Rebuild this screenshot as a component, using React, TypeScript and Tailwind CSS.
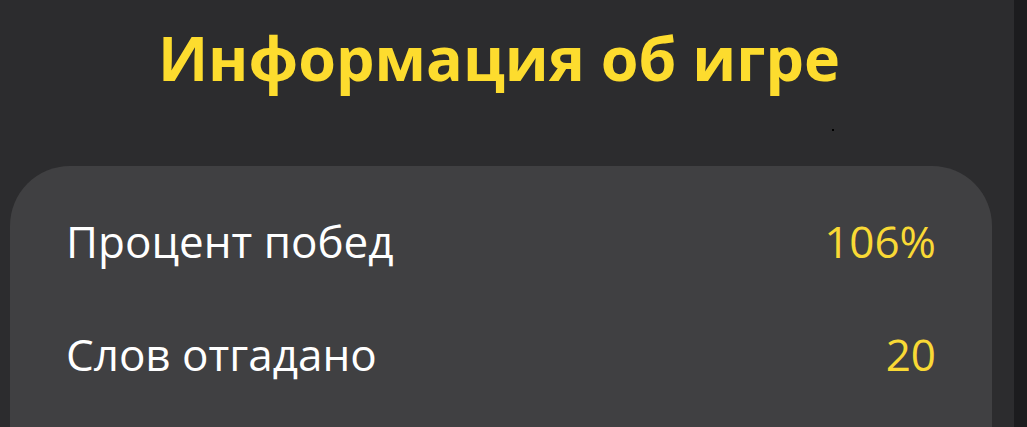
export default function App() {
  return (
    <div className="flex h-[427px] w-[1027px] overflow-hidden bg-[#2c2c2e]" style={{ fontFamily: '"Open Sans", sans-serif' }}>
      <div className="relative flex flex-1 flex-col pl-[10px] pr-[22px]">
        <h1 className="mt-[18px] pr-[4px] text-center text-[61px] font-bold leading-[80px] text-[#fddc2e]">
          Информация об игре
        </h1>
        <div className="absolute left-[832px] top-[129px] h-[2px] w-[2px] bg-black" />
        <div className="mt-[68px] flex flex-1 flex-col gap-[57px] rounded-t-[60px] bg-[#404042] px-[56px] pt-[47px]">
          <div className="flex items-center justify-between text-[44px] leading-[56px]">
            <span className="text-white">Процент побед</span>
            <span className="text-[#f9d935]">106%</span>
          </div>
          <div className="flex items-center justify-between text-[44px] leading-[56px]">
            <span className="text-white">Слов отгадано</span>
            <span className="text-[#f9d935]">20</span>
          </div>
        </div>
      </div>
      <div className="h-full w-[13px] bg-[#1c1c1e]" />
    </div>
  );
}
